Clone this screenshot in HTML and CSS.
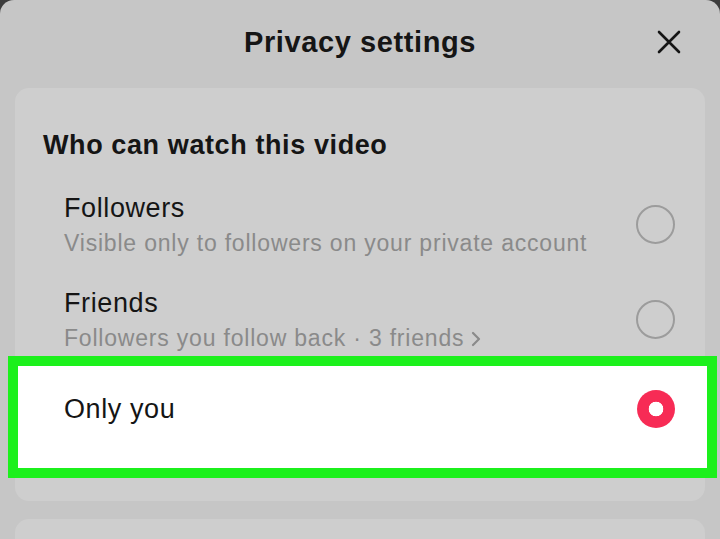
FILE: index.html
```html
<!DOCTYPE html>
<html lang="en">
<head>
<meta charset="utf-8">
<title>Privacy settings</title>
<link rel="stylesheet" href="styles.css">
</head>
<body>
<div class="sheet">
  <header class="header">
    <h1 class="title">Privacy settings</h1>
    <button class="close" aria-label="Close">
      <svg width="26" height="26" viewBox="0 0 26 26"><path d="M3 3 L23 23 M23 3 L3 23" stroke="#151515" stroke-width="2.6" stroke-linecap="round" fill="none"/></svg>
    </button>
  </header>
  <section class="card">
    <h2 class="heading">Who can watch this video</h2>
    <div class="option">
      <div class="text">
        <div class="opt-title">Followers</div>
        <div class="opt-sub">Visible only to followers on your private account</div>
      </div>
      <span class="radio"></span>
    </div>
    <div class="option">
      <div class="text">
        <div class="opt-title">Friends</div>
        <div class="opt-sub">Followers you follow back · 3 friends <svg class="chev" width="12" height="18" viewBox="0 0 12 18"><path d="M3 3 L9 9 L3 15" stroke="#8a8a8a" stroke-width="2.2" fill="none" stroke-linecap="round" stroke-linejoin="round"/></svg></div>
      </div>
      <span class="radio"></span>
    </div>
    <div class="option selected">
      <div class="text">
        <div class="opt-title">Only you</div>
      </div>
      <span class="radio on"></span>
    </div>
  </section>
  <section class="card next"></section>
</div>
</body>
</html>
```
FILE: styles.css
```css
html, body {
  margin: 0;
  padding: 0;
  background: #3c3c3c;
}
body {
  width: 720px;
  height: 539px;
  overflow: hidden;
  font-family: "Liberation Sans", Arial, sans-serif;
  color: #151515;
}
.sheet {
  height: 539px;
  background: #c6c6c6;
  border-radius: 14px 14px 0 0;
  overflow: hidden;
}
.header {
  height: 88px;
  display: flex;
  align-items: center;
  justify-content: center;
  position: relative;
}
.title {
  margin: 0 0 3px;
  font-size: 29px;
  font-weight: bold;
  letter-spacing: 0.6px;
}
.close {
  position: absolute;
  right: 38px;
  top: 29px;
  width: 26px;
  height: 26px;
  padding: 0;
  border: 0;
  background: none;
  display: flex;
}
.card {
  margin: 0 15px;
  background: #cecece;
  border-radius: 14px;
  padding: 40px 0 23px;
}
.heading {
  margin: 0 0 16px 28px;
  font-size: 27px;
  line-height: 34px;
  font-weight: bold;
  letter-spacing: 0.6px;
}
.option {
  display: flex;
  align-items: center;
  justify-content: space-between;
  padding: 13px 30px 0 49px;
}
.option + .option {
  margin-top: 12px;
}
.text {
  display: flex;
  flex-direction: column;
}
.opt-title {
  font-size: 27px;
  line-height: 35px;
  letter-spacing: 0.6px;
}
.opt-sub {
  font-size: 23px;
  line-height: 35px;
  color: #8a8a8a;
  letter-spacing: 0.8px;
  display: flex;
  align-items: center;
  gap: 6px;
}
.radio {
  width: 35px;
  height: 35px;
  border: 2px solid #9c9c9c;
  border-radius: 50%;
  flex: none;
  margin-top: -3px;
}
.option.selected {
  box-sizing: border-box;
  margin: 0 -12px 0 -7px;
  background: #ffffff;
  border: 10px solid #1cf01c;
  height: 122px;
  padding: 0 32px 16px 46px;
  align-items: center;
}
.option.selected .opt-title {
  line-height: 34px;
}
.radio.on {
  width: 38px;
  height: 38px;
  margin-top: 0;
  border: 0;
  background: radial-gradient(circle, #ffffff 0 7px, #f72b55 7.6px);
}
.card.next {
  margin-top: 18px;
  height: 60px;
  padding: 0;
}
```
